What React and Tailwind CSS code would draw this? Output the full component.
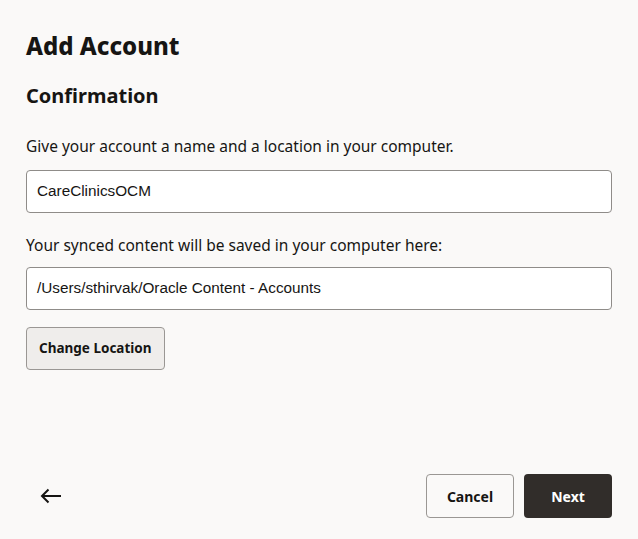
import React from "react";

export default function App() {
  return (
    <div className="w-[638px] h-[539px] bg-[#faf9f8] flex flex-col px-[26px] pt-[30px] pb-[21px] text-[#161513]" style={{ fontFamily: '"Noto Sans", "Open Sans", sans-serif' }}>
      <h1 className="text-[24px] font-extrabold leading-[32px]">Add Account</h1>
      <h2 className="text-[20px] font-bold leading-[28px] mt-[20px]">Confirmation</h2>
      <p className="text-[15.5px] leading-[22px] mt-[25px]">Give your account a name and a location in your computer.</p>
      <div className="mt-[13px] h-[43px] bg-white border border-[#8f8c89] rounded-[4px] flex items-center px-[10px] text-[15.3px]" style={{ fontFamily: '"Liberation Sans", Arial, sans-serif' }}>
        CareClinicsOCM
      </div>
      <p className="text-[15.5px] leading-[22px] mt-[21px]">Your synced content will be saved in your computer here:</p>
      <div className="mt-[11px] h-[43px] bg-white border border-[#8f8c89] rounded-[4px] flex items-center px-[10px] text-[15.3px]" style={{ fontFamily: '"Liberation Sans", Arial, sans-serif' }}>
        /Users/sthirvak/Oracle Content - Accounts
      </div>
      <div className="mt-[17px]">
        <button className="h-[43px] px-[12px] bg-[#efedeb] border border-[#9a9794] rounded-[4px] text-[13.5px] font-bold">
          Change Location
        </button>
      </div>
      <div className="mt-auto flex items-center">
        <button className="w-[50px] h-[44px] flex items-center justify-center">
          <svg width="22" height="16" viewBox="0 0 22 16" fill="none" stroke="#161513" strokeWidth="2">
            <path d="M21 8H2" />
            <path d="M8.5 1.5L2 8l6.5 6.5" />
          </svg>
        </button>
        <div className="ml-auto flex gap-[10px]">
          <button className="w-[88px] h-[44px] bg-[#faf9f8] border border-[#9a9794] rounded-[4px] text-[14px] font-bold">Cancel</button>
          <button className="w-[88px] h-[44px] bg-[#312d2a] text-white rounded-[4px] text-[14px] font-bold">Next</button>
        </div>
      </div>
    </div>
  );
}
